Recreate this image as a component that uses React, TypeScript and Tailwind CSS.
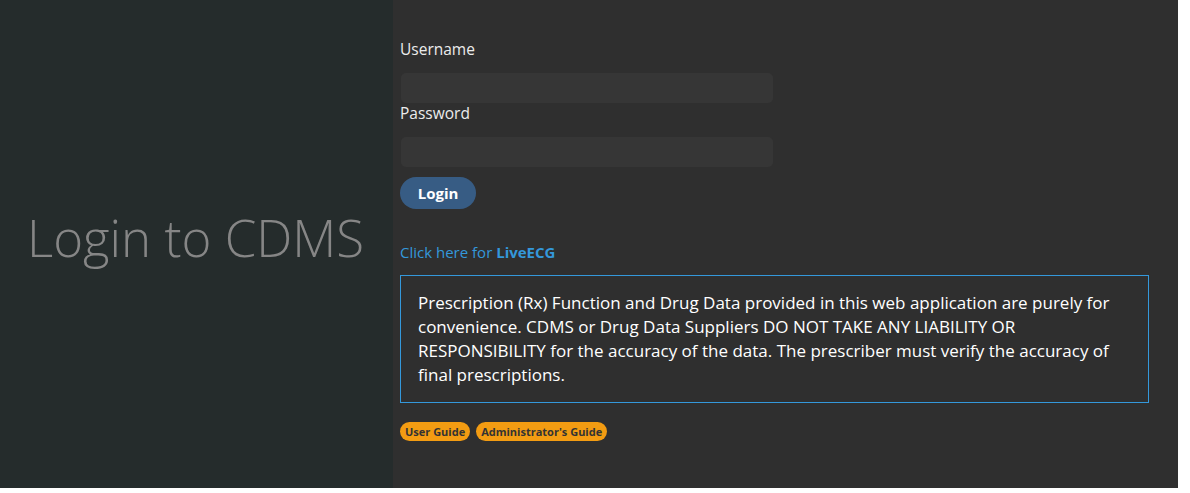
import React from 'react';

const font = { fontFamily: '"Open Sans", "Noto Sans", sans-serif' };

export default function App() {
  return (
    <div className="min-h-screen bg-white">
      <div className="flex w-[1178px] h-[488px]" style={font}>
        {/* Left title panel */}
        <div className="w-[393px] shrink-0 bg-[#252c2c] flex items-center pl-[27px]">
          <h1 className="text-[51px] leading-none font-light text-[#868686] pb-[13px]">Login to CDMS</h1>
        </div>

        {/* Form panel */}
        <div className="flex-1 bg-[#2f2f2f] pl-[7px] pt-[39px] text-[15px] leading-[24px] text-[#ececec]">
          <label className="block font-medium text-[15.5px] leading-[20px]">Username</label>
          <input
            type="text"
            className="block mt-[14px] ml-[1px] w-[372px] h-[30px] rounded-[5px] bg-[#363636] outline-none text-white px-2"
          />
          <label className="block font-medium text-[15.5px] leading-[20px]">Password</label>
          <input
            type="password"
            className="block mt-[14px] ml-[1px] w-[372px] h-[30px] rounded-[5px] bg-[#363636] outline-none text-white px-2"
          />
          <button className="block mt-[10px] h-[32px] w-[76px] rounded-full bg-[#375c84] text-white font-bold text-[15px]">
            Login
          </button>

          <div className="mt-[31px] text-[#3498db]">
            Click here for <span className="font-bold">LiveECG</span>
          </div>

          <div className="mt-[11px] w-[749px] border border-[#3498db] px-[17px] pt-[15px] pb-[15px] text-[17px] text-white">
            Prescription (Rx) Function and Drug Data provided in this web application are purely for convenience. CDMS or
            Drug Data Suppliers DO NOT TAKE ANY LIABILITY OR RESPONSIBILITY for the accuracy of the data. The prescriber
            must verify the accuracy of final prescriptions.
          </div>

          <div className="mt-[19px] flex gap-[6px]">
            <a className="rounded-full bg-[#f39c12] px-[5px] h-[19px] leading-[19px] text-[11px] font-bold text-[#333]">
              User Guide
            </a>
            <a className="rounded-full bg-[#f39c12] px-[5px] h-[19px] leading-[19px] text-[11px] font-bold text-[#333]">
              Administrator's Guide
            </a>
          </div>
        </div>
      </div>
    </div>
  );
}
